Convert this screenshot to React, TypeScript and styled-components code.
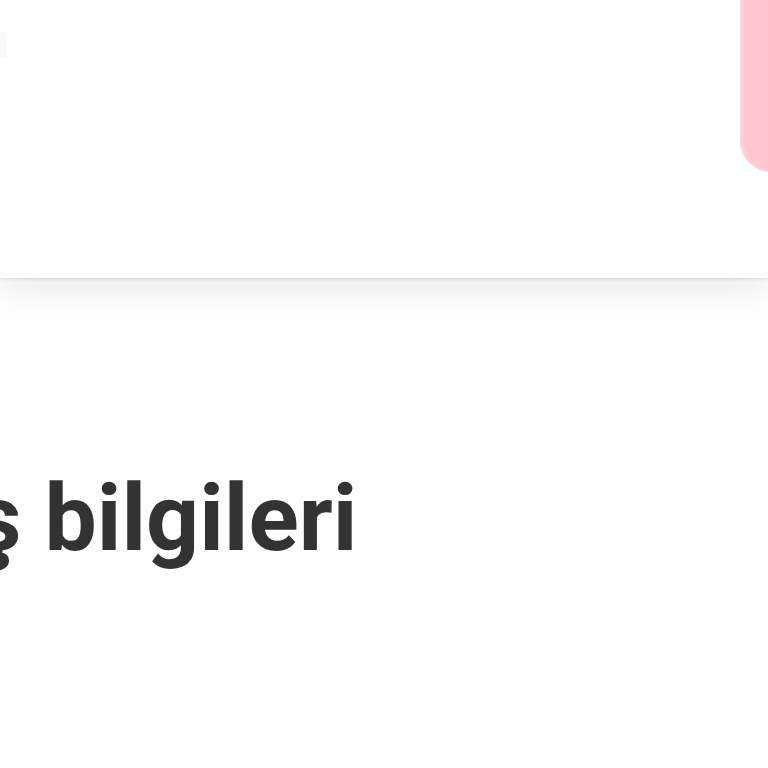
import React from "react";
import styled, { createGlobalStyle } from "styled-components";

const Global = createGlobalStyle`
  html, body {
    margin: 0;
    padding: 0;
    background: #fefefe;
    overflow: hidden;
  }
  body {
    font-family: Roboto, "Noto Sans", sans-serif;
  }
`;

const Page = styled.div`
  width: 768px;
  height: 768px;
  overflow: hidden;
  display: flex;
  flex-direction: column;
  background: #fefefe;
`;

const Header = styled.header`
  position: relative;
  z-index: 1;
  height: 278px;
  flex: none;
  background: #ffffff;
  display: flex;
  justify-content: space-between;
  align-items: flex-start;
  box-shadow: 0 1px 3px rgba(0, 0, 0, 0.1), 0 6px 36px rgba(0, 0, 0, 0.1);
`;

const BackHint = styled.div`
  margin-top: 32px;
  margin-left: -20px;
  width: 27px;
  height: 26px;
  border-radius: 4px;
  background: #fafafa;
`;

const PinkTab = styled.div`
  width: 70px;
  height: 172px;
  margin-right: -42px;
  background: #ffc7d4;
  border-bottom-left-radius: 32px;
  box-shadow: inset 3px 0 0 #ffd3dd;
`;

const Main = styled.main`
  flex: 1;
  padding-top: 194px;
`;

const Title = styled.h1`
  margin: 0 0 0 -173px;
  font-size: 93px;
  line-height: 93px;
  font-weight: 700;
  color: #333333;
  white-space: nowrap;
`;

export default function App() {
  return (
    <Page>
      <Global />
      <Header>
        <BackHint />
        <PinkTab />
      </Header>
      <Main>
        <Title>Giriş bilgileri</Title>
      </Main>
    </Page>
  );
}
